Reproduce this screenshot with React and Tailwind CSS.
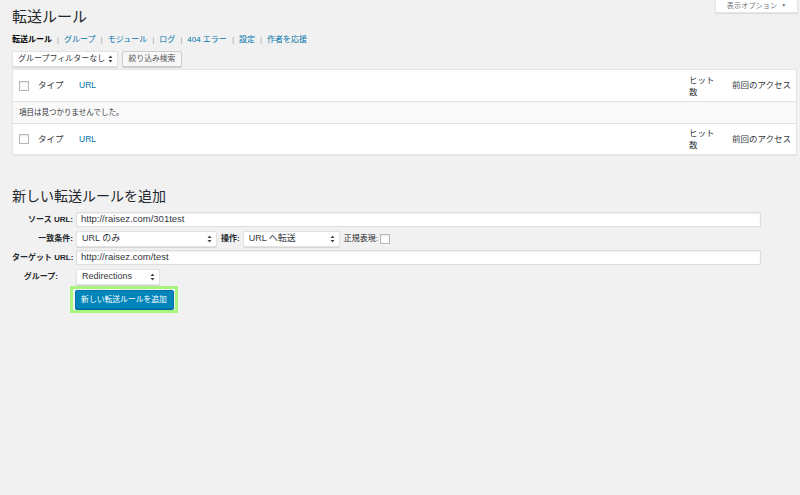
import React from "react";

const Arrows = () => (
  <svg width="5" height="8" viewBox="0 0 5 8" className="shrink-0">
    <path d="M2.5 0.5 L4.5 3 L0.5 3 Z" fill="#444" />
    <path d="M2.5 7.5 L4.5 5 L0.5 5 Z" fill="#444" />
  </svg>
);

const Select = ({ label, className }) => (
  <div
    className={`h-[16px] bg-white rounded-[2px] shadow-[0_1px_1px_rgba(0,0,0,0.12)] border border-[#e3e3e3] flex items-center justify-between pl-[5px] pr-[4px] text-[#32373c] ${className}`}
  >
    <span className="whitespace-nowrap">{label}</span>
    <Arrows />
  </div>
);

const Checkbox = () => (
  <div className="w-[10px] h-[10px] bg-white border border-[#b4b9be] shadow-[inset_0_1px_2px_rgba(0,0,0,0.1)] shrink-0" />
);

const TableRow = ({ h = "h-[31px]" }) => (
  <div className={`${h} flex items-center text-[8.5px] text-[#32373c]`}>
    <div className="pl-[6px] w-[25px]">
      <Checkbox />
    </div>
    <div className="w-[41px]">タイプ</div>
    <div className="flex-1 text-[#0073aa]">URL</div>
    <div className="w-[43px] leading-[12px]">
      <div className="w-[30px]">ヒット数</div>
    </div>
    <div className="w-[64px] whitespace-nowrap">前回のアクセス</div>
  </div>
);

const Field = ({ label, children, labelClass = "" }) => (
  <div className="flex items-center h-[15px]">
    <div className={`w-[61px] text-right font-bold text-[8px] text-[#23282d] whitespace-nowrap ${labelClass}`}>
      {label}
    </div>
    <div className="ml-[3px] flex items-center">{children}</div>
  </div>
);

const TextInput = ({ value }) => (
  <div className="w-[685px] h-[15px] bg-white border border-[#dddddd] shadow-[inset_0_1px_2px_rgba(0,0,0,0.07)] flex items-center px-[4px] text-[9.5px] text-[#32373c]">
    {value}
  </div>
);

export default function App() {
  const nav = ["グループ", "モジュール", "ログ", "404 エラー", "設定", "作者を応援"];
  return (
    <div
      className="relative min-h-[495px] bg-[#f1f1f1]"
      style={{ fontFamily: '"Liberation Sans", "Noto Sans CJK JP", sans-serif' }}
    >
      {/* screen options tab */}
      <div className="absolute top-0 right-[2px] w-[83px] h-[13px] bg-white shadow-[0_1px_1px_rgba(0,0,0,0.08)] border-x border-b border-[#e5e5e5] flex items-center justify-center gap-[4px] text-[7.2px] text-[#72777c]">
        <span>表示オプション</span>
        <span className="text-[5px]">▼</span>
      </div>

      <div className="pl-[12px] pr-[3px] pt-[9px]">
        <h1 className="text-[15px] leading-[16px] text-[#23282d]">転送ルール</h1>

        <div className="mt-[8px] h-[14px] flex items-center text-[8px] whitespace-nowrap">
          <span className="font-bold text-[#000]">転送ルール</span>
          {nav.map((n) => (
            <React.Fragment key={n}>
              <span className="text-[#a0a5aa] mx-[5px]">|</span>
              <span className="text-[#0073aa]">{n}</span>
            </React.Fragment>
          ))}
        </div>

        <div className="mt-[4px] flex items-center gap-[4px]">
          <Select label="グループフィルターなし" className="w-[106px] text-[8px]" />
          <div className="h-[16px] w-[60px] bg-[#f7f7f7] border border-[#cccccc] rounded-[2px] shadow-[0_1px_0_#ccc] flex items-center justify-center text-[7.8px] text-[#555]">
            絞り込み検索
          </div>
        </div>

        <div className="mt-[2px] bg-white border border-[#e5e5e5] shadow-[0_1px_1px_rgba(0,0,0,0.04)]">
          <div className="border-b border-[#e1e1e1]">
            <TableRow />
          </div>
          <div className="h-[22px] bg-[#f9f9f9] border-b border-[#e1e1e1] flex items-center pl-[6px] text-[7.5px] text-[#32373c]">
            項目は見つかりませんでした。
          </div>
          <TableRow h="h-[30px]" />
        </div>

        <h2 className="mt-[33px] text-[14px] leading-[16px] text-[#23282d]">新しい転送ルールを追加</h2>

        <div className="mt-[8px] flex flex-col gap-[4px]">
          <Field label="ソース URL:">
            <TextInput value="http://raisez.com/301test" />
          </Field>
          <Field label="一致条件:">
            <Select label="URL のみ" className="w-[141px] h-[15px] text-[9px]" />
            <span className="ml-[4px] font-bold text-[8px] text-[#23282d]">操作:</span>
            <Select label="URL へ転送" className="ml-[3px] w-[97px] h-[15px] text-[9px]" />
            <span className="ml-[4px] text-[8px] text-[#23282d]">正規表現:</span>
            <div className="ml-[2px]">
              <Checkbox />
            </div>
          </Field>
          <Field label="ターゲット URL:">
            <TextInput value="http://raisez.com/test" />
          </Field>
          <Field label="グループ:" labelClass="pr-[15px]">
            <Select label="Redirections" className="w-[84px] h-[15px] text-[9px]" />
          </Field>
        </div>

        <div className="mt-[2px] ml-[58px] w-[108px] h-[27px] border-[3px] border-[#a7f57f] flex items-center justify-center">
          <div className="w-[99px] h-[19px] bg-[#0085ba] border border-[#0073aa] rounded-[2px] shadow-[0_1px_0_#006799] flex items-center justify-center text-[7.8px] text-white">
            新しい転送ルールを追加
          </div>
        </div>
      </div>
    </div>
  );
}
